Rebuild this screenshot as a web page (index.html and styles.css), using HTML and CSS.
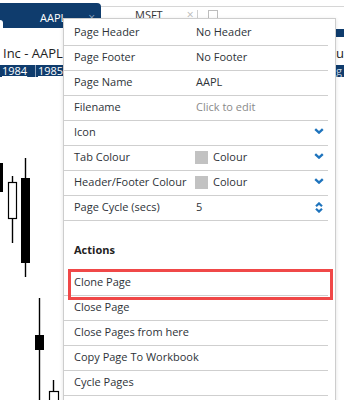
FILE: index.html
```html
<!DOCTYPE html>
<html lang="en">
<head>
  <meta charset="UTF-8" />
  <title>Page Settings</title>
  <link rel="stylesheet" href="styles.css">
</head>
<body>
<div class="screen">

  <!-- tab strip -->
  <div class="tabs">
    <div class="tab active">
      <span class="tab-name">AAPL</span>
      <span class="tab-close">×</span>
    </div>
    <div class="tab-strip">
      <span class="tab-name">MSFT</span>
      <span class="tab-close">×</span>
      <span class="tab-sep"></span>
      <span class="tab-add"></span>
    </div>
  </div>

  <div class="subbar"><span class="subbar-end"></span></div>

  <div class="title-row">
    <span>Inc - AAPL</span>
    <span class="clip">urn</span>
  </div>

  <div class="years">
    <span class="year">1984</span>
    <span class="year">1985</span>
    <span class="clip year-end">g</span>
  </div>

  <svg class="chart" width="344" height="323" viewBox="0 77 344 323">
    <g stroke="#000" stroke-width="1.4" fill="none">
      <line x1="-3" y1="150" x2="-3" y2="200"/>
      <line x1="12.5" y1="176" x2="12.5" y2="243"/>
      <line x1="25.5" y1="158" x2="25.5" y2="277"/>
      <line x1="39.5" y1="298" x2="39.5" y2="400"/>
      <line x1="53.5" y1="380" x2="53.5" y2="392"/>
    </g>
    <rect x="-6" y="163" width="9" height="29" fill="#000"/>
    <rect x="8.5" y="182.5" width="8" height="36" fill="#fff" stroke="#000" stroke-width="1.2"/>
    <rect x="21" y="178" width="9" height="85" fill="#000"/>
    <rect x="35" y="335" width="9" height="15" fill="#000"/>
    <rect x="49.5" y="391.5" width="9" height="12" fill="#fff" stroke="#000" stroke-width="1.2"/>
  </svg>

  <!-- page settings menu -->
  <div class="menu">
    <div class="row"><span>Page Header</span><span>No Header</span></div>
    <div class="row"><span>Page Footer</span><span>No Footer</span></div>
    <div class="row"><span>Page Name</span><span>AAPL</span></div>
    <div class="row"><span>Filename</span><span class="muted">Click to edit</span></div>
    <div class="row">
      <span>Icon</span><span></span>
      <svg class="chev" width="10" height="6" viewBox="0 0 10 6"><path d="M1.2 1.2 L5 4.6 L8.8 1.2" fill="none" stroke="#1f74bd" stroke-width="2.4"/></svg>
    </div>
    <div class="row">
      <span>Tab Colour</span>
      <span class="swatch-cell"><span class="swatch"></span>Colour</span>
      <svg class="chev" width="10" height="6" viewBox="0 0 10 6"><path d="M1.2 1.2 L5 4.6 L8.8 1.2" fill="none" stroke="#1f74bd" stroke-width="2.4"/></svg>
    </div>
    <div class="row">
      <span>Header/Footer Colour</span>
      <span class="swatch-cell"><span class="swatch"></span>Colour</span>
      <svg class="chev" width="10" height="6" viewBox="0 0 10 6"><path d="M1.2 1.2 L5 4.6 L8.8 1.2" fill="none" stroke="#1f74bd" stroke-width="2.4"/></svg>
    </div>
    <div class="row">
      <span>Page Cycle (secs)</span><span>5</span>
      <svg class="spin" width="10" height="11" viewBox="0 0 10 11"><path d="M2 4.2 L5 1.4 L8 4.2 M2 6.8 L5 9.6 L8 6.8" fill="none" stroke="#1f74bd" stroke-width="2.2"/></svg>
    </div>

    <div class="section">Actions</div>

    <div class="row action">Clone Page</div>
    <div class="row action">Close Page</div>
    <div class="row action">Close Pages from here</div>
    <div class="row action">Copy Page To Workbook</div>
    <div class="row action">Cycle Pages</div>
  </div>

  <div class="highlight"></div>
</div>
</body>
</html>
```

FILE: styles.css
```css
body {
  margin: 0;
  background: #ffffff;
  font-family: 'Open Sans', 'DejaVu Sans', sans-serif;
  font-size: 11px;
  color: #2e3338;
}

.screen {
  position: relative;
  width: 344px;
  height: 400px;
  overflow: hidden;
}

/* tabs */
.tabs {
  display: flex;
  height: 28px;
}

.tab.active {
  position: relative;
  display: flex;
  width: 101px;
  height: 25px;
  margin-top: 3px;
  padding: 8px 6px 0 40px;
  box-sizing: border-box;
  background: #0f3c6d;
  border-radius: 0 4px 0 0;
  color: #ffffff;
  line-height: 14px;
}

.tab.active::before {
  content: "";
  position: absolute;
  left: 0;
  bottom: 0;
  width: 3px;
  height: 8px;
  background: #ffffff;
  border-top-right-radius: 3px;
}

.tab.active .tab-close {
  margin-left: auto;
  color: #8ea6c0;
  font-size: 12px;
}

.tab-strip {
  flex: 1;
  display: flex;
  align-items: flex-start;
  margin-top: 6px;
  padding: 1px 0 0 34px;
  border-top: 1px solid #d6d6d6;
  line-height: 14px;
  color: #333;
}

.tab-strip .tab-close {
  margin-left: 24px;
  color: #b8b8b8;
  font-size: 12px;
}

.tab-sep {
  width: 1px;
  height: 9px;
  margin: 2px 0 0 3px;
  background: #cfcfcf;
}

.tab-add {
  width: 8px;
  height: 8px;
  margin: 2px 0 0 10px;
  border: 1px solid #bdbdbd;
}

.subbar {
  display: flex;
  justify-content: flex-end;
  height: 9px;
}

.subbar-end {
  width: 8px;
  height: 8px;
  margin-top: 1px;
  background: #0f3c6d;
}

.title-row {
  display: flex;
  height: 28px;
  padding: 7px 0 3px 3px;
  box-sizing: border-box;
  font-size: 13px;
  line-height: 18px;
  color: #222;
}

.clip {
  width: 8px;
  margin-left: auto;
  overflow: hidden;
  white-space: nowrap;
}

.years {
  display: flex;
  height: 12px;
  background: #0f3c6d;
  color: #ffffff;
  line-height: 12px;
}

.year {
  width: 33px;
  padding-left: 2px;
  border-right: 1px solid #8da3bd;
  text-decoration: underline;
}

.year + .year {
  border-right: none;
  padding-left: 2px;
}

.year-end {
  color: #c9d6e4;
}

.chart {
  display: block;
}

/* menu */
.menu {
  position: absolute;
  left: 63px;
  top: 18px;
  width: 273px;
  height: 400px;
  box-sizing: border-box;
  padding-top: 2px;
  background: #ffffff;
  border: 1px solid #cdcdcd;
  box-shadow: 0 1px 4px rgba(0, 0, 0, 0.12);
}

.row {
  display: grid;
  grid-template-columns: 122px 1fr 14px;
  align-items: center;
  height: 25px;
  margin-right: 7px;
  padding: 0 0 2px 10px;
  box-sizing: border-box;
  border-bottom: 1px solid #cfcfcf;
  line-height: 22px;
}

.row.action {
  display: block;
  padding-bottom: 0;
  line-height: 22px;
}

.muted {
  color: #8a8a8a;
}

.swatch-cell {
  display: flex;
  align-items: center;
}

.swatch {
  width: 13px;
  height: 13px;
  margin: 0 5px 0 -1px;
  background: #c2c2c2;
}

.chev {
  display: block;
  margin-bottom: 2px;
}

.spin {
  display: block;
}

.section {
  height: 50px;
  padding: 18px 0 0 10px;
  box-sizing: border-box;
  font-weight: bold;
  line-height: 22px;
  color: #222;
}

.highlight {
  position: absolute;
  left: 68px;
  top: 269px;
  width: 265px;
  height: 31px;
  box-sizing: border-box;
  border: 3px solid #f04848;
}
```
